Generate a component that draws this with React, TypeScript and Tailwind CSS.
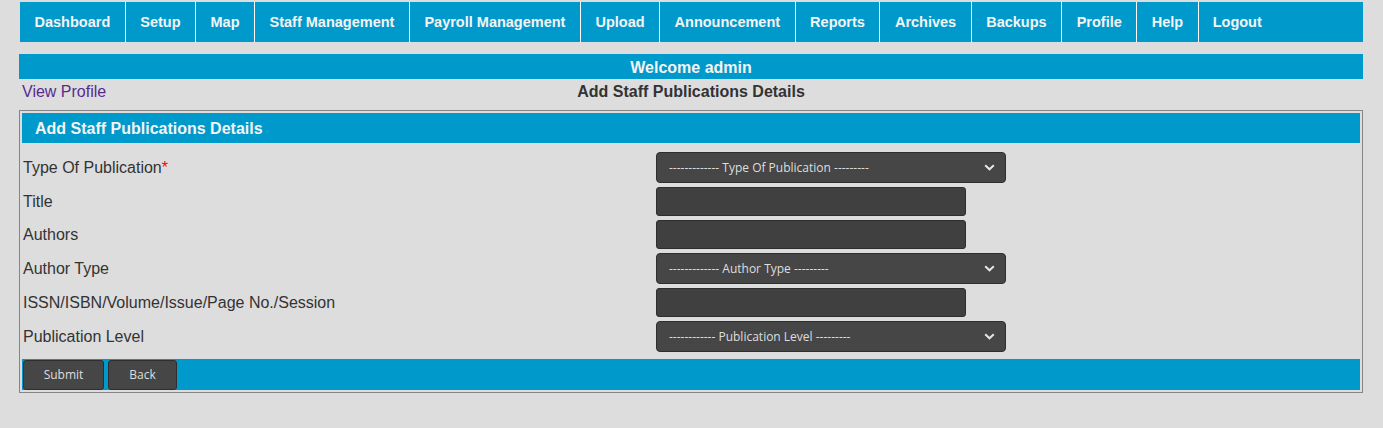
import React from 'react';

const navItems = [
  'Dashboard',
  'Setup',
  'Map',
  'Staff Management',
  'Payroll Management',
  'Upload',
  'Announcement',
  'Reports',
  'Archives',
  'Backups',
  'Profile',
  'Help',
  'Logout',
];

const Chevron = () => (
  <svg width="11" height="7" viewBox="0 0 11 7" className="shrink-0">
    <polyline points="1.2,1.2 5.5,5.3 9.8,1.2" fill="none" stroke="#e6e6e6" strokeWidth="2" />
  </svg>
);

const SelectBox = ({ placeholder }: { placeholder: string }) => (
  <div className="flex h-[31px] w-[350px] items-center justify-between rounded-[4px] border border-[#2e2e2e] bg-[#464646] pl-[12px] pr-[10px] font-['Open_Sans',sans-serif] text-[12px] text-[#dedede]">
    <span>{placeholder}</span>
    <Chevron />
  </div>
);

const TextBox = () => (
  <div className="h-[29px] w-[310px] rounded-[3px] border border-[#2e2e2e] bg-[#404040]" />
);

interface Row {
  label: string;
  required?: boolean;
  control: React.ReactNode;
}

const rows: Row[] = [
  { label: 'Type Of Publication', required: true, control: <SelectBox placeholder="------------- Type Of Publication ---------" /> },
  { label: 'Title', control: <TextBox /> },
  { label: 'Authors', control: <TextBox /> },
  { label: 'Author Type', control: <SelectBox placeholder="------------- Author Type ---------" /> },
  { label: 'ISSN/ISBN/Volume/Issue/Page No./Session', control: <TextBox /> },
  { label: 'Publication Level', control: <SelectBox placeholder="------------ Publication Level ---------" /> },
];

export default function App() {
  return (
    <div className="min-h-[428px] bg-[#dddddd] pt-[2px] font-['Liberation_Sans',Arial,sans-serif] text-[#333333]">
      {/* Menu principal */}
      <nav className="ml-[20px] mr-[20px] flex h-[40px] bg-[#0099cc]">
        {navItems.map((item, i) => (
          <div
            key={item}
            className={
              i < navItems.length - 1
                ? 'flex items-center border-r border-white px-[14.5px] pt-[2px] text-[14.5px] font-bold text-[#f4f4f4]'
                : 'flex items-center px-[14px] pt-[2px] text-[14.5px] font-bold text-[#f4f4f4]'
            }
          >
            {item}
          </div>
        ))}
      </nav>

      <div className="mx-[19px] mr-[20px] mt-[12px]">
        <div className="flex h-[25px] items-center justify-center bg-[#0099cc] pt-[2px] text-[16px] font-bold text-[#f4f4f4]">
          Welcome admin
        </div>

        <div className="grid h-[24px] grid-cols-[1fr_auto_1fr] items-center pt-[1px]">
          <a className="pl-[3px] text-[16px] text-[#5a2a8f]">View Profile</a>
          <div className="text-[16px] font-bold text-[#333333]">Add Staff Publications Details</div>
          <div />
        </div>

        {/* Formulário */}
        <div className="mt-[7px] border border-[#858585] px-[2px] pb-[2px] pt-[2px]">
          <div className="flex h-[30px] items-center bg-[#0099cc] pl-[13px] pt-[2px] text-[16px] font-bold text-[#f4f4f4]">
            Add Staff Publications Details
          </div>

          <div className="flex flex-col gap-[4px] pt-[9px]">
            {rows.map((row) => (
              <div key={row.label} className="flex items-center">
                <div className="w-[634px] pl-[1px] text-[16px] text-[#333333]">
                  {row.label}
                  {row.required && <span className="text-[#ff0000]">*</span>}
                </div>
                {row.control}
              </div>
            ))}
          </div>

          <div className="mt-[7px] flex h-[31px] items-center gap-[4px] bg-[#0099cc] pl-[1px]">
            <button className="h-[30px] w-[81px] rounded-[3px] border border-[#2e2e2e] bg-[#464646] font-['Open_Sans',sans-serif] text-[12px] text-[#dedede]">
              Submit
            </button>
            <button className="h-[30px] w-[69px] rounded-[3px] border border-[#2e2e2e] bg-[#464646] font-['Open_Sans',sans-serif] text-[12px] text-[#dedede]">
              Back
            </button>
          </div>
        </div>
      </div>
    </div>
  );
}
